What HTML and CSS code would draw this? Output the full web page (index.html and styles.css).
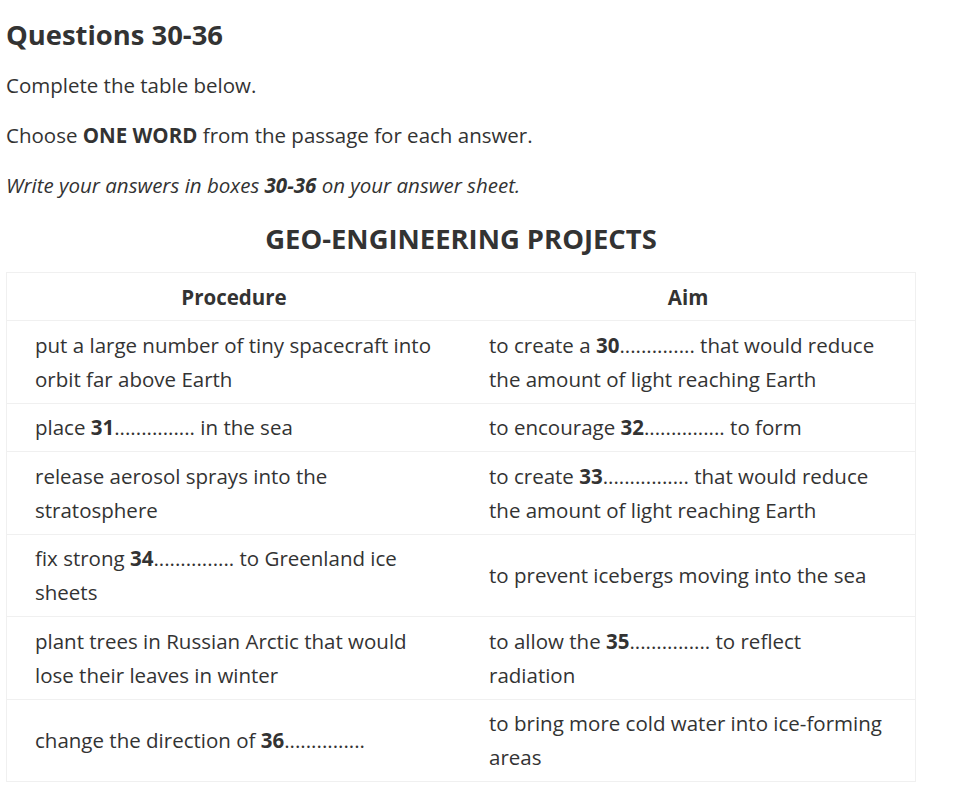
FILE: index.html
```html
<!DOCTYPE html>
<html lang="en">
<head>
<meta charset="utf-8">
<title>Questions 30-36</title>
<link rel="stylesheet" href="styles.css">
</head>
<body>
<div class="page">
  <h2 class="q-title">Questions 30-36</h2>
  <p class="instr">Complete the table below.</p>
  <p class="instr">Choose <strong>ONE WORD</strong> from the passage for each answer.</p>
  <p class="instr"><em>Write your answers in boxes <strong>30-36</strong> on your answer sheet.</em></p>
  <h3 class="t-title">GEO-ENGINEERING PROJECTS</h3>
  <table class="qtable">
    <thead>
      <tr><th>Procedure</th><th>Aim</th></tr>
    </thead>
    <tbody>
      <tr>
        <td>put a large number of tiny spacecraft into orbit far above Earth</td>
        <td>to create a <strong>30</strong>.............. that would reduce the amount of light reaching Earth</td>
      </tr>
      <tr>
        <td>place <strong>31</strong>............... in the sea</td>
        <td>to encourage <strong>32</strong>............... to form</td>
      </tr>
      <tr>
        <td>release aerosol sprays into the stratosphere</td>
        <td>to create <strong>33</strong>................ that would reduce the amount of light reaching Earth</td>
      </tr>
      <tr>
        <td>fix strong <strong>34</strong>............... to Greenland ice sheets</td>
        <td>to prevent icebergs moving into the sea</td>
      </tr>
      <tr>
        <td>plant trees in Russian Arctic that would lose their leaves in winter</td>
        <td>to allow the <strong>35</strong>............... to reflect radiation</td>
      </tr>
      <tr>
        <td>change the direction of <strong>36</strong>...............</td>
        <td>to bring more cold water into ice-forming areas</td>
      </tr>
    </tbody>
  </table>
</div>
</body>
</html>
```

FILE: styles.css
```css
html, body {
  margin: 0;
  padding: 0;
  background: #ffffff;
}
body {
  font-family: "Open Sans", "Noto Sans", sans-serif;
  color: #333333;
  font-size: 20.5px;
}
.page {
  width: 910px;
  padding: 0 6px;
}
.q-title {
  font-size: 27.4px;
  font-weight: 700;
  line-height: 34px;
  margin: 18px 0 0 0;
}
.instr {
  font-size: 20.5px;
  line-height: 34px;
  margin: 16px 0 0 0;
}
.t-title {
  font-size: 27.4px;
  font-weight: 700;
  text-align: center;
  line-height: 34px;
  margin: 20px 0 16px 0;
}
.qtable {
  width: 910px;
  border-collapse: collapse;
  table-layout: fixed;
  border: 1px solid #f0f0f0;
}
.qtable th,
.qtable td {
  width: 50%;
  line-height: 34.25px;
  font-size: 20.5px;
  border-top: 1px solid #f0f0f0;
  vertical-align: middle;
  text-align: left;
}
.qtable td {
  padding: 6.5px 27px 6.5px 28px;
}
.qtable th {
  padding: 6.5px 28px;
  text-align: center;
  font-weight: 700;
}
```
